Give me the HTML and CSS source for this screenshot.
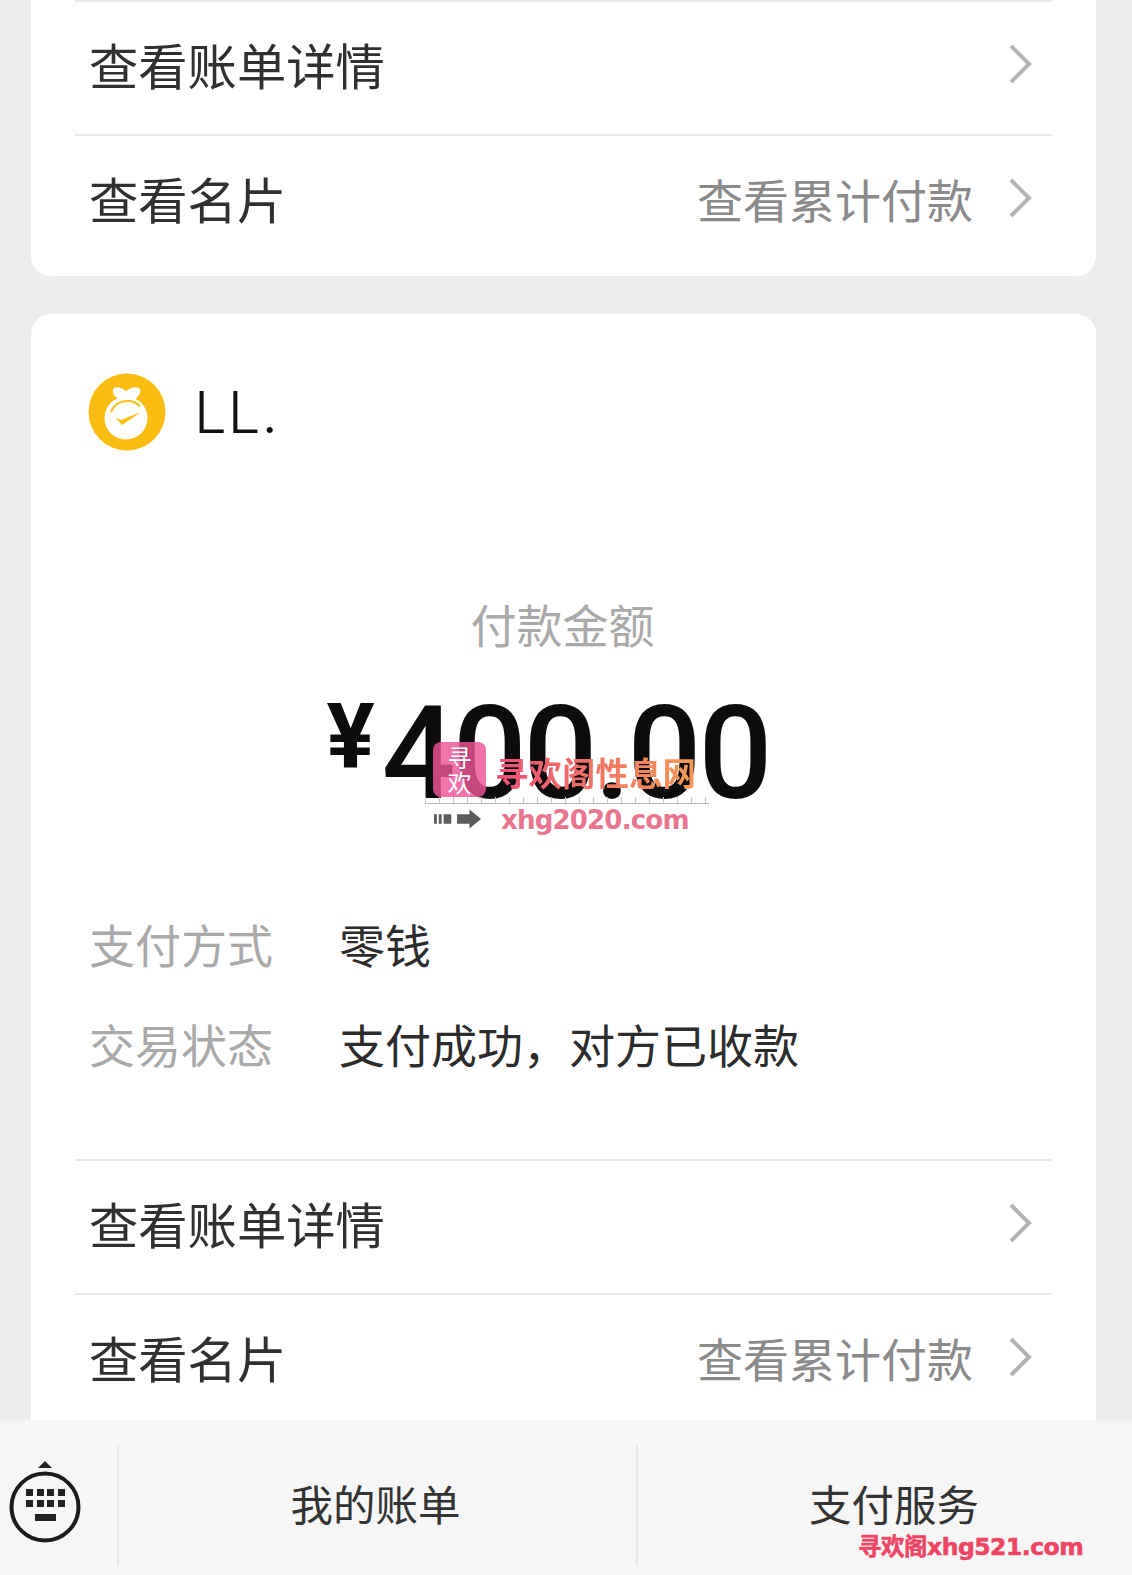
FILE: index.html
```html
<!DOCTYPE html>
<html lang="zh-CN">
<head>
    <meta charset="UTF-8">
    <meta name="viewport" content="width=device-width, initial-scale=1.0">
    <title>支付凭证</title>
    <link rel="stylesheet" href="styles.css">
</head>
<body>
    <div class="page">
        <!-- Previous card, cut off by the top of the screen -->
        <section class="card card-top">
            <a class="row">
                <span class="row-title">查看账单详情</span>
                <svg class="chevron" viewBox="0 0 24 42"><path d="M3 3l18 18L3 39"/></svg>
            </a>
            <a class="row">
                <span class="row-title">查看名片</span>
                <span class="row-extra">查看累计付款</span>
                <svg class="chevron" viewBox="0 0 24 42"><path d="M3 3l18 18L3 39"/></svg>
            </a>
        </section>

        <section class="card card-main">
            <div class="payee">
                <svg class="avatar" viewBox="0 0 78 78">
                    <circle cx="39" cy="39" r="38.5" fill="#fbbd12"/>
                    <path fill="#fff" d="M26 15c3-2 8 0 12 3 4-3 10-5 13-3 3 2 1 8-4 11H31c-5-2-8-8-5-11z"/>
                    <circle cx="38" cy="45" r="21.5" fill="#fff"/>
                    <path fill="none" stroke="#fbbd12" stroke-width="2" d="M23 39c2-6 8-11 17-11 5 0 9 2 12 5"/>
                    <path fill="#fbbd12" d="M28 45l5 2 20-8-19 13z"/>
                </svg>
                <span class="payee-name">LL.</span>
            </div>

            <div class="amount">
                <div class="amount-label">付款金额</div>
                <div class="amount-value"><span class="currency">¥</span>400.00</div>
            </div>

            <dl class="details">
                <div class="detail">
                    <dt>支付方式</dt>
                    <dd>零钱</dd>
                </div>
                <div class="detail">
                    <dt>交易状态</dt>
                    <dd>支付成功，对方已收款</dd>
                </div>
            </dl>

            <a class="row">
                <span class="row-title">查看账单详情</span>
                <svg class="chevron" viewBox="0 0 24 42"><path d="M3 3l18 18L3 39"/></svg>
            </a>
            <a class="row">
                <span class="row-title">查看名片</span>
                <span class="row-extra">查看累计付款</span>
                <svg class="chevron" viewBox="0 0 24 42"><path d="M3 3l18 18L3 39"/></svg>
            </a>

            <!-- Watermark stamped over the amount -->
            <div class="stamp">
                <div class="stamp-logo">寻<br>欢</div>
                <div class="stamp-name">寻欢阁性息网</div>
                <div class="stamp-ruler"></div>
                <svg class="stamp-arrow" viewBox="0 0 50 20"><path fill="#5c5c5c" d="M0 5h3v10H0zM5 5h3v10H5zM10 5h8v10h-8zM24 5h13V0l12 10-12 10v-5H24z"/></svg>
                <div class="stamp-url">xhg2020.com</div>
            </div>
        </section>
    </div>

    <footer class="bar">
        <div class="bar-keyboard">
            <svg class="keyboard" viewBox="0 0 74 84">
                <path fill="#222" d="M37 0l7 7H30z"/>
                <circle cx="37" cy="46" r="33.5" fill="none" stroke="#1c1c1c" stroke-width="4"/>
                <g fill="#222">
                    <rect x="18" y="28" width="7" height="7"/><rect x="29" y="28" width="7" height="7"/><rect x="39" y="28" width="7" height="7"/><rect x="50" y="28" width="7" height="7"/>
                    <rect x="18" y="39" width="7" height="7"/><rect x="29" y="39" width="7" height="7"/><rect x="39" y="39" width="7" height="7"/><rect x="50" y="39" width="7" height="7"/>
                    <rect x="27" y="53" width="21" height="7"/>
                </g>
            </svg>
        </div>
        <div class="bar-item bar-bills">我的账单</div>
        <div class="bar-item bar-service">支付服务</div>
        <div class="bar-mark">寻欢阁xhg521.com</div>
    </footer>
</body>
</html>
```

FILE: styles.css
```css
body {
    margin: 0;
    height: 1575px;
    overflow: hidden;
    position: relative;
    background-color: #ededed;
    font-family: "Noto Sans CJK SC", "Noto Sans", sans-serif;
    color: #303030;
}

.page {
    padding: 0 36px 0 31px;
}

.card {
    background-color: #fff;
    padding: 0 44px;
}

.card-top {
    border-radius: 0 0 20px 20px;
    height: 276px;
    margin-bottom: 38px;
}

.card-main {
    position: relative;
    border-radius: 20px 20px 0 0;
    height: 1200px;
}

/* List rows */
.row {
    display: flex;
    align-items: center;
    box-sizing: border-box;
    height: 134px;
    padding: 0 20px 8px 14px;
    border-top: 2px solid #e9e9e9;
}

.row-title {
    flex: 1;
    font-size: 49.3px;
    line-height: 1;
    color: #303030;
}

.row-extra {
    font-size: 46px;
    line-height: 1;
    color: #8a8a8a;
    margin-right: 35px;
}

.chevron {
    width: 24px;
    height: 42px;
    fill: none;
    stroke: #b2b2b2;
    stroke-width: 4;
}

/* Payee */
.payee {
    display: flex;
    align-items: center;
    gap: 28px;
    padding: 59px 0 0 13px;
}

.avatar {
    width: 78px;
    height: 78px;
}

.payee-name {
    font-family: Inter, sans-serif;
    font-weight: 300;
    font-size: 58px;
    line-height: 78px;
    letter-spacing: 1px;
    color: #111;
}

/* Amount */
.amount {
    text-align: center;
    padding-top: 142px;
}

.amount-label {
    font-size: 46px;
    line-height: 60px;
    padding-right: 2px;
    color: #a9a9a9;
}

.amount-value {
    font-family: Roboto, sans-serif;
    font-weight: 500;
    font-size: 130px;
    line-height: 130px;
    margin-top: 36px;
    padding-right: 31px;
    color: #0c0c0c;
    letter-spacing: -3px;
}

.currency {
    font-size: 90px;
    font-weight: 700;
    line-height: 1;
    vertical-align: 30px;
    margin-right: 10px;
}

/* Details */
.details {
    margin: 74px 0 0;
    padding: 0 14px;
    height: 266px;
}

.detail {
    display: flex;
    align-items: center;
    height: 100px;
    font-size: 46px;
}

.detail dt {
    width: 250px;
    color: #a9a9a9;
}

.detail dd {
    margin: 0;
    color: #2c2c2c;
}

/* Watermark */
.stamp {
    position: absolute;
    left: 390px;
    top: 425px;
    width: 300px;
    height: 110px;
}

.stamp-logo {
    position: absolute;
    left: 12px;
    top: 3px;
    width: 53px;
    height: 55px;
    border-radius: 8px;
    background-color: rgba(238, 84, 150, 0.82);
    color: #fff;
    font-size: 24px;
    line-height: 25px;
    text-align: center;
    padding-top: 2px;
    box-sizing: border-box;
}

.stamp-name {
    position: absolute;
    left: 74px;
    top: 11px;
    font-size: 33.5px;
    line-height: 44px;
    font-weight: 700;
    white-space: nowrap;
    background: linear-gradient(90deg, #ee4f78, #f49a55);
    -webkit-background-clip: text;
    background-clip: text;
    color: transparent;
}

.stamp-ruler {
    position: absolute;
    left: 4px;
    top: 58px;
    width: 284px;
    height: 6px;
    border-bottom: 1px solid #b5b5b5;
    background: repeating-linear-gradient(90deg, #c4c4c4 0, #c4c4c4 1px, transparent 1px, transparent 14px);
}

.stamp-arrow {
    position: absolute;
    left: 13px;
    top: 70px;
    width: 48px;
    height: 20px;
}

.stamp-url {
    position: absolute;
    left: 80px;
    top: 66px;
    font-family: "DejaVu Sans", sans-serif;
    font-weight: 700;
    font-size: 26px;
    line-height: 30px;
    letter-spacing: -0.8px;
    color: #e87690;
}

/* Bottom bar */
.bar {
    position: absolute;
    left: 0;
    right: 0;
    bottom: 0;
    height: 155px;
    display: flex;
    align-items: center;
    padding-top: 14px;
    background-color: #f6f6f6;
    border-top: 1px solid #f0f0f0;
    box-sizing: border-box;
}

.bar-keyboard {
    width: 117px;
    display: flex;
    justify-content: center;
    padding-right: 28px;
    margin-bottom: 4px;
    box-sizing: border-box;
}

.keyboard {
    width: 74px;
    height: 84px;
}

.bar-item {
    height: 121px;
    display: flex;
    align-items: center;
    justify-content: center;
    box-sizing: border-box;
    padding-bottom: 6px;
    border-left: 2px solid #e6e6e6;
    font-size: 42.5px;
    color: #333;
}

.bar-bills {
    width: 519px;
    padding-right: 4px;
}

.bar-service {
    flex: 1;
    padding-left: 18px;
}

.bar-mark {
    position: absolute;
    left: 858px;
    top: 110px;
    font-family: "DejaVu Sans", "Noto Sans CJK SC", sans-serif;
    font-weight: 700;
    font-size: 23.5px;
    line-height: 32px;
    letter-spacing: -0.5px;
    color: #ee4565;
    -webkit-text-stroke: 0.6px #ee4565;
    text-shadow: 0 0 2px #fff;
    white-space: nowrap;
}
```
